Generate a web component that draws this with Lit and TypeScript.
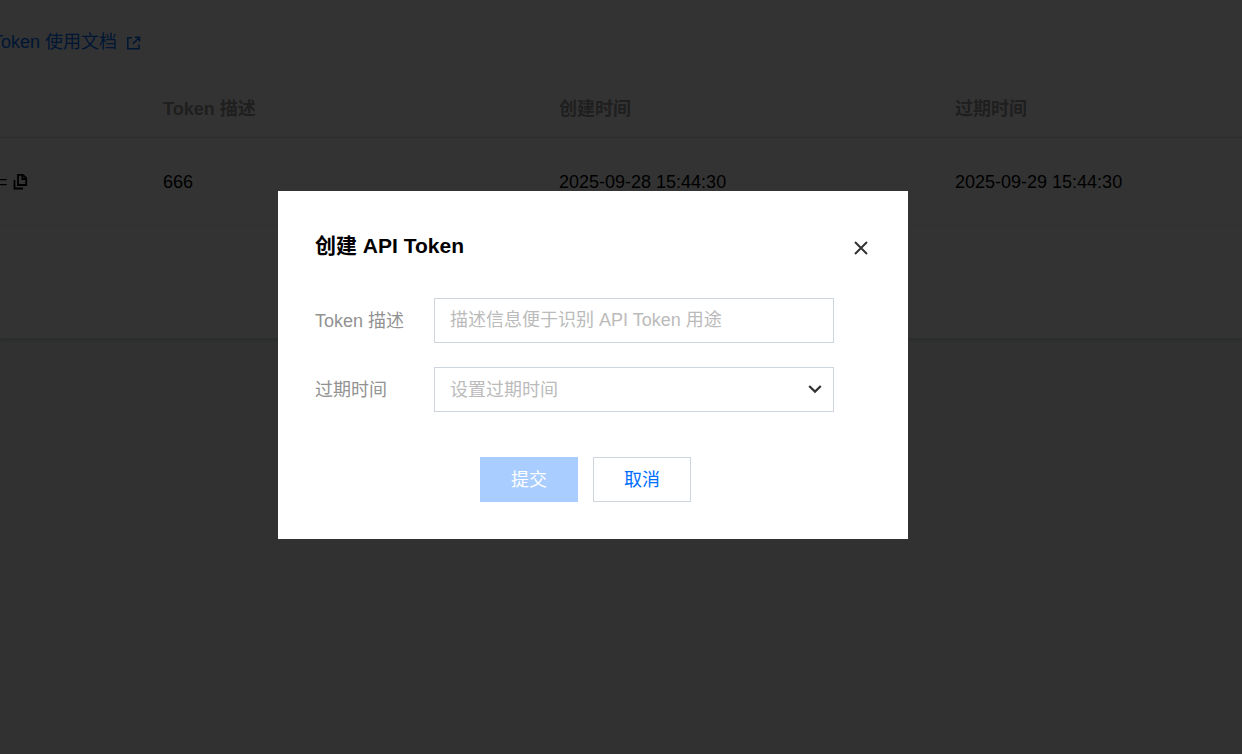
import { LitElement, html, css } from "lit";
import { customElement } from "lit/decorators.js";

interface TokenRow {
  desc: string;
  created: string;
  expires: string;
}

const ROWS: TokenRow[] = [
  { desc: "666", created: "2025-09-28 15:44:30", expires: "2025-09-29 15:44:30" },
];

@customElement("token-dialog")
class TokenDialog extends LitElement {
  static styles = css`
    :host {
      display: block;
      width: 630px;
      max-width: 100%;
      background: #fff;
    }
    .dialog {
      padding: 37px;
    }
    .head {
      display: flex;
      align-items: center;
      justify-content: space-between;
      margin-bottom: 34px;
    }
    .title {
      margin: 0;
      font-size: 21px;
      line-height: 36px;
      font-weight: 700;
      color: #000;
    }
    .close {
      display: flex;
      margin-top: 4px;
      padding: 3px;
      border: 0;
      background: none;
    }
    .field {
      display: grid;
      grid-template-columns: 119px minmax(0, 400px);
      align-items: center;
      margin-bottom: 24px;
    }
    .label {
      color: #929292;
    }
    .control {
      box-sizing: border-box;
      width: 100%;
      height: 45px;
      padding: 0 15px;
      border: 1px solid #cfd5de;
      border-radius: 0;
      background: #fff;
      font: inherit;
      color: #bbb;
      appearance: none;
      outline: none;
    }
    .control::placeholder {
      color: #bbb;
      opacity: 1;
    }
    .select {
      display: grid;
      align-items: center;
    }
    .select > * {
      grid-area: 1 / 1;
    }
    .chevron {
      justify-self: end;
      margin-right: 12px;
      pointer-events: none;
    }
    .actions {
      display: flex;
      justify-content: center;
      padding-top: 21px;
    }
    .button {
      box-sizing: border-box;
      width: 98px;
      height: 45px;
      margin-right: 15px;
      padding: 0;
      border: 1px solid #cfd5de;
      background: #fff;
      font: inherit;
      color: #006eff;
    }
    .primary {
      border-color: #a9cdff;
      background: #a9cdff;
      color: #fff;
    }
  `;

  render() {
    return html`
      <form class="dialog" role="dialog" aria-labelledby="title">
        <div class="head">
          <h3 class="title" id="title">创建 API Token</h3>
          <button class="close" type="button" aria-label="关闭">
            <svg width="14" height="14" viewBox="0 0 14 14" fill="none" stroke="#333" stroke-width="2">
              <path d="M1 1 13 13M13 1 1 13" />
            </svg>
          </button>
        </div>
        <div class="field">
          <label class="label" for="desc">Token 描述</label>
          <input class="control" id="desc" type="text" placeholder="描述信息便于识别 API Token 用途" />
        </div>
        <div class="field">
          <label class="label" for="expire">过期时间</label>
          <div class="select">
            <select class="control" id="expire">
              <option>设置过期时间</option>
            </select>
            <svg class="chevron" width="14" height="12" viewBox="0 0 14 12" fill="none" stroke="#333" stroke-width="2.2">
              <path d="M1.2 2 7 7.6 12.8 2" />
            </svg>
          </div>
        </div>
        <div class="actions">
          <button class="button primary" type="submit" disabled>提交</button>
          <button class="button" type="button">取消</button>
        </div>
      </form>
    `;
  }
}

@customElement("app-root")
class AppRoot extends LitElement {
  static styles = css`
    :host {
      display: block;
      min-height: 100vh;
      overflow: hidden;
      background: #f3f5f8;
      font-family: "Liberation Sans", "Noto Sans CJK SC", sans-serif;
      font-size: 18px;
      line-height: 28px;
      color: #000;
    }
    .card {
      padding: 28px 0 112px;
      background: #fff;
      box-shadow: 0 3px 4px rgba(54, 58, 80, 0.16);
    }
    .doc {
      display: flex;
      align-items: center;
      gap: 9px;
      margin: 0 0 24px -8px;
      color: #006eff;
      text-decoration: none;
    }
    .table {
      width: 100%;
      table-layout: fixed;
      border-collapse: collapse;
    }
    .first {
      width: 163px;
    }
    .wide {
      width: 396px;
    }
    .table th {
      height: 57px;
      padding: 0;
      border-bottom: 1px solid #ddd;
      text-align: left;
      font-weight: 700;
      color: #999;
    }
    .table td {
      height: 87px;
      padding: 0;
      border-bottom: 1px solid #eee;
    }
    .token {
      display: flex;
      align-items: center;
      gap: 5px;
      margin-left: -3px;
    }
    .mask {
      position: fixed;
      inset: 0;
      display: flex;
      align-items: center;
      justify-content: center;
      padding: 0 56px 24px 0;
      background: rgba(0, 0, 0, 0.8);
    }
  `;

  render() {
    return html`
      <main class="card">
        <a class="doc" href="#">
          <span>Token 使用文档</span>
          <svg width="15" height="15" viewBox="0 0 15 15" fill="none" stroke="currentColor" stroke-width="1.5">
            <path d="M6 2.7H1.8V13.7H13V9.5M9 2.2H13.5V6.8M13 2.7 6.8 8.9" />
          </svg>
        </a>
        <table class="table">
          <colgroup>
            <col class="first" />
            <col class="wide" />
            <col class="wide" />
            <col />
          </colgroup>
          <thead>
            <tr>
              <th></th>
              <th>Token 描述</th>
              <th>创建时间</th>
              <th>过期时间</th>
            </tr>
          </thead>
          <tbody>
            ${ROWS.map(
              (row) => html`
                <tr>
                  <td>
                    <div class="token">
                      <span>=</span>
                      <svg width="15" height="17" viewBox="0 0 15 17" fill="none" stroke="#000" stroke-width="1.8">
                        <path d="M5 1.9H10L13.2 5.1V12H5ZM9.3 2V6H13M1.5 7V15.5H10" />
                      </svg>
                    </div>
                  </td>
                  <td>${row.desc}</td>
                  <td>${row.created}</td>
                  <td>${row.expires}</td>
                </tr>
              `,
            )}
          </tbody>
        </table>
      </main>
      <div class="mask"><token-dialog></token-dialog></div>
    `;
  }
}
